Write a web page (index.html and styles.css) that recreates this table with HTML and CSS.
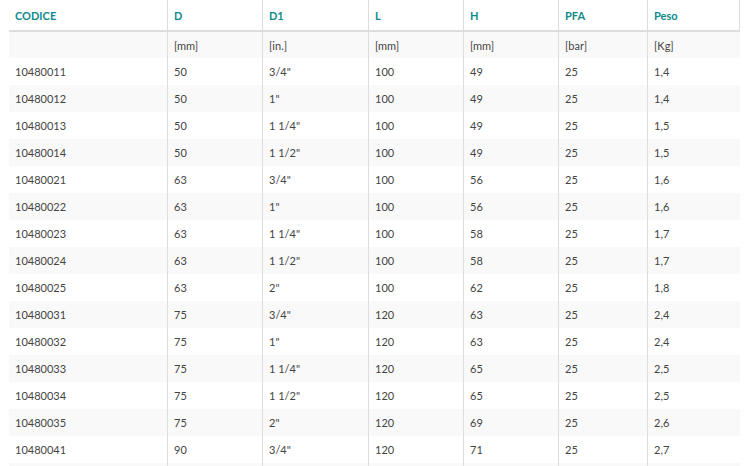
FILE: index.html
```html
<!DOCTYPE html>
<html lang="it">
<head>
<meta charset="utf-8">
<title>Tabella</title>
<link rel="stylesheet" href="styles.css">
</head>
<body>
<table class="spec">
  <colgroup>
    <col class="c1"><col class="c2"><col class="c3"><col class="c4"><col class="c5"><col class="c6"><col class="c7">
  </colgroup>
  <thead>
    <tr><th>CODICE</th><th>D</th><th>D1</th><th>L</th><th>H</th><th>PFA</th><th class="last">Peso</th></tr>
  </thead>
  <tbody>
    <tr class="units"><td></td><td>[mm]</td><td>[in.]</td><td>[mm]</td><td>[mm]</td><td>[bar]</td><td>[Kg]</td></tr>
    <tr><td>10480011</td><td>50</td><td>3/4"</td><td>100</td><td>49</td><td>25</td><td>1,4</td></tr>
    <tr><td>10480012</td><td>50</td><td>1"</td><td>100</td><td>49</td><td>25</td><td>1,4</td></tr>
    <tr><td>10480013</td><td>50</td><td>1 1/4"</td><td>100</td><td>49</td><td>25</td><td>1,5</td></tr>
    <tr><td>10480014</td><td>50</td><td>1 1/2"</td><td>100</td><td>49</td><td>25</td><td>1,5</td></tr>
    <tr><td>10480021</td><td>63</td><td>3/4"</td><td>100</td><td>56</td><td>25</td><td>1,6</td></tr>
    <tr><td>10480022</td><td>63</td><td>1"</td><td>100</td><td>56</td><td>25</td><td>1,6</td></tr>
    <tr><td>10480023</td><td>63</td><td>1 1/4"</td><td>100</td><td>58</td><td>25</td><td>1,7</td></tr>
    <tr><td>10480024</td><td>63</td><td>1 1/2"</td><td>100</td><td>58</td><td>25</td><td>1,7</td></tr>
    <tr><td>10480025</td><td>63</td><td>2"</td><td>100</td><td>62</td><td>25</td><td>1,8</td></tr>
    <tr><td>10480031</td><td>75</td><td>3/4"</td><td>120</td><td>63</td><td>25</td><td>2,4</td></tr>
    <tr><td>10480032</td><td>75</td><td>1"</td><td>120</td><td>63</td><td>25</td><td>2,4</td></tr>
    <tr><td>10480033</td><td>75</td><td>1 1/4"</td><td>120</td><td>65</td><td>25</td><td>2,5</td></tr>
    <tr><td>10480034</td><td>75</td><td>1 1/2"</td><td>120</td><td>65</td><td>25</td><td>2,5</td></tr>
    <tr><td>10480035</td><td>75</td><td>2"</td><td>120</td><td>69</td><td>25</td><td>2,6</td></tr>
    <tr><td>10480041</td><td>90</td><td>3/4"</td><td>120</td><td>71</td><td>25</td><td>2,7</td></tr>
    <tr class="cut"><td></td><td></td><td></td><td></td><td></td><td></td><td></td></tr>
  </tbody>
</table>
</body>
</html>
```
FILE: styles.css
```css
html, body {
  margin: 0;
  padding: 0;
  background: #ffffff;
  overflow: hidden;
}

.spec {
  margin-left: 9px;
  width: 731px;
  table-layout: fixed;
  border-collapse: separate;
  border-spacing: 0;
  font-family: Lato, "Open Sans", sans-serif;
  font-size: 11px;
  color: #444444;
}

.c1 { width: 158px; }
.c2 { width: 95px; }
.c3 { width: 106px; }
.c4 { width: 95px; }
.c5 { width: 95px; }
.c6 { width: 89px; }
.c7 { width: 93px; }

.spec th {
  height: 30px;
  padding: 0 6px;
  text-align: left;
  font-weight: bold;
  color: #0e8a8a;
  border-bottom: 2px solid #dddddd;
  border-left: 1px solid #dddddd;
  vertical-align: middle;
}

.spec th:first-child {
  border-left: none;
}

.spec th.last {
  border-right: 1px solid #dddddd;
}

.spec td {
  height: 27px;
  padding: 0 6px;
  border-left: 1px solid #dddddd;
  vertical-align: middle;
  white-space: nowrap;
}

.spec td:first-child {
  border-left: none;
}

.spec .units td {
  height: 26px;
}

.spec tbody tr:nth-child(odd) {
  background: #f9f9f9;
}
```
